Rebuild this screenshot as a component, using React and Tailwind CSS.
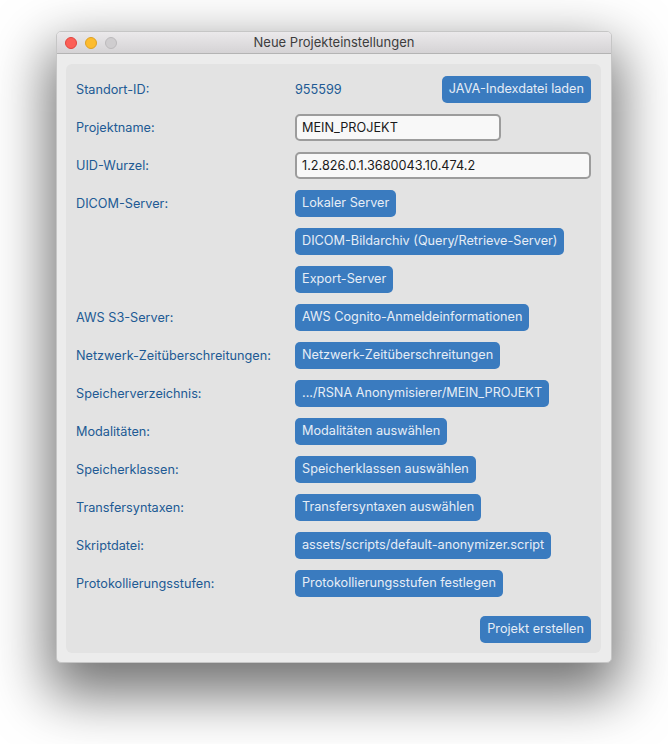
import React from "react";

const F = { fontFamily: "Inter, 'Liberation Sans', sans-serif" };

function Btn({ children }) {
  return (
    <button className="h-[27px] px-[7px] rounded-[5px] bg-[#3a7bbf] text-[#e6edf6] text-[12.7px] leading-none whitespace-nowrap">
      {children}
    </button>
  );
}

function Label({ children }) {
  return <div className="h-[27px] flex items-center text-[12.7px] text-[#215a94]">{children}</div>;
}

function Val({ children, className = "" }) {
  return <div className={"h-[27px] flex items-center " + className}>{children}</div>;
}

export default function App() {
  const rows = [
    ["DICOM-Server:", "Lokaler Server"],
    ["", "DICOM-Bildarchiv (Query/Retrieve-Server)"],
    ["", "Export-Server"],
    ["AWS S3-Server:", "AWS Cognito-Anmeldeinformationen"],
    ["Netzwerk-Zeitüberschreitungen:", "Netzwerk-Zeitüberschreitungen"],
    ["Speicherverzeichnis:", ".../RSNA Anonymisierer/MEIN_PROJEKT"],
    ["Modalitäten:", "Modalitäten auswählen"],
    ["Speicherklassen:", "Speicherklassen auswählen"],
    ["Transfersyntaxen:", "Transfersyntaxen auswählen"],
    ["Skriptdatei:", "assets/scripts/default-anonymizer.script"],
    ["Protokollierungsstufen:", "Protokollierungsstufen festlegen"],
  ];
  return (
    <div className="w-[668px] h-[744px] bg-white pl-[56px] pt-[31px]" style={F}>
      <div className="w-[556px] h-[632px] flex flex-col rounded-[5px] bg-[#ececec] border border-[#c6c6c6] overflow-hidden shadow-[0_24px_55px_8px_rgba(0,0,0,0.55)]">
        <div className="h-[22px] shrink-0 relative flex items-center justify-center bg-gradient-to-b from-[#ebe9eb] to-[#d5d3d5] border-b border-[#b4b4b4]">
          <div className="absolute left-[8px] top-[5px] flex gap-[8px]">
            <span className="w-[12px] h-[12px] rounded-full bg-[#fc5f57] border border-[#e0443e]" />
            <span className="w-[12px] h-[12px] rounded-full bg-[#fdbc2e] border border-[#dea123]" />
            <span className="w-[12px] h-[12px] rounded-full bg-[#cfcdcf] border border-[#bcbabc]" />
          </div>
          <span className="text-[13px] text-[#3d3d3d]">Neue Projekteinstellungen</span>
        </div>
        <div className="flex-1 pt-[10px] pl-[9px] pr-[10px] pb-[9px]">
          <div className="h-full rounded-[6px] bg-[#e3e3e3] px-[10px] pt-[12px] flex flex-col">
            <div className="grid grid-cols-[219px_1fr] gap-y-[11px]">
              <Label>Standort-ID:</Label>
              <Val className="justify-between">
                <span className="text-[12.7px] text-[#215a94]">955599</span>
                <Btn>JAVA-Indexdatei laden</Btn>
              </Val>
              <Label>Projektname:</Label>
              <Val>
                <div className="w-[206px] h-[27px] rounded-[5px] border-2 border-[#9c9c9c] bg-[#f8f8f8] flex items-center px-[5px] text-[12.7px] text-[#1a1a1a]">
                  MEIN_PROJEKT
                </div>
              </Val>
              <Label>UID-Wurzel:</Label>
              <Val>
                <div className="w-full h-[27px] rounded-[5px] border-2 border-[#9c9c9c] bg-[#f8f8f8] flex items-center px-[5px] text-[12.7px] text-[#1a1a1a]">
                  1.2.826.0.1.3680043.10.474.2
                </div>
              </Val>
              {rows.map(([l, b], i) => (
                <React.Fragment key={i}>
                  <Label>{l}</Label>
                  <Val>
                    <Btn>{b}</Btn>
                  </Val>
                </React.Fragment>
              ))}
            </div>
            <div className="flex justify-end mt-[19px]">
              <Btn>Projekt erstellen</Btn>
            </div>
          </div>
        </div>
      </div>
    </div>
  );
}
